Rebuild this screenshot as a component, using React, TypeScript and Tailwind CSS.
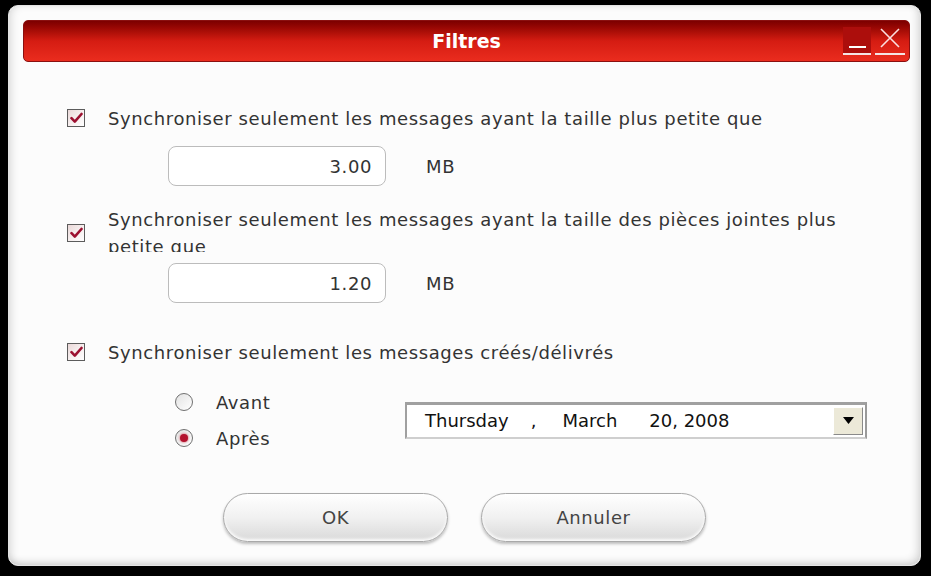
import React from "react";

function CheckBox() {
  return (
    <span className="flex h-[18px] w-[18px] shrink-0 items-center justify-center border border-[#5c5c5c] bg-gradient-to-br from-[#ead8d8] via-[#f6eeee] to-white">
      <svg width="13" height="12" viewBox="0 0 13 12">
        <path d="M1.5 6.2 L4.8 9.6 L11.5 2" fill="none" stroke="#9c1030" strokeWidth="2.6" strokeLinecap="round" strokeLinejoin="round" />
      </svg>
    </span>
  );
}

function Radio({ checked }: { checked?: boolean }) {
  return (
    <span className="flex h-[18px] w-[18px] shrink-0 items-center justify-center rounded-full border border-[#707070] bg-gradient-to-br from-[#e2e2e2] to-white">
      {checked && <span className="h-[8px] w-[8px] rounded-full bg-[#b3122e] shadow-[0_0_2px_1px_rgba(220,140,150,0.8)]" />}
    </span>
  );
}

function SizeInput({ value }: { value: string }) {
  return (
    <div className="ml-[101px] flex items-center">
      <div className="flex h-[40px] w-[218px] items-center justify-end rounded-[8px] border border-[#bcbcbc] bg-white pr-[13px] text-[18px] tracking-[0.6px] text-[#333]">
        {value}
      </div>
      <span className="ml-[40px] text-[18px] tracking-[0.6px] text-[#333]">MB</span>
    </div>
  );
}

export default function App() {
  return (
    <div className="h-[576px] w-[931px] overflow-hidden bg-black pb-[10px] pl-[8px] pr-[10px] pt-[5px] font-['DejaVu_Sans',sans-serif]">
      <div className="flex h-full w-full flex-col rounded-[10px] border border-[#e4e4e4] bg-[#fcfcfc] shadow-[inset_4px_0_8px_-2px_rgba(0,0,0,0.14),inset_-4px_-4px_8px_-2px_rgba(0,0,0,0.16)]">
        {/* Title bar */}
        <div className="ml-[14px] mr-[10px] mt-[14px] grid h-[42px] grid-cols-[1fr_auto_1fr] items-center rounded-[5px] border border-[#8a1010] bg-gradient-to-b from-[#7c0000] via-[#d51c12] to-[#ea2c1e]">
          <span />
          <span className="text-[19px] font-bold text-white">Filtres</span>
          <div className="flex items-center justify-end gap-[4px] pr-[4px]">
            <span className="flex h-[28px] w-[28px] flex-col items-center justify-end border-b-2 border-[#f4e4e4] bg-[#ac0e0c] pb-[5px]">
              <span className="h-[2px] w-[17px] bg-white" />
            </span>
            <span className="flex h-[28px] w-[30px] items-center justify-center border-b-2 border-[#f4e4e4] pb-[4px]">
              <svg width="22" height="20" viewBox="0 0 22 20">
                <path d="M2 1 L20 19 M20 1 L2 19" stroke="#fbe0e0" strokeWidth="1.6" />
              </svg>
            </span>
          </div>
        </div>

        {/* Content */}
        <div className="flex flex-col pl-[58px] text-[#333]">
          <div className="mt-[43px] flex h-[26px] items-center">
            <CheckBox />
            <span className="ml-[23px] text-[18px] tracking-[0.6px]">
              Synchroniser seulement les messages ayant la taille plus petite que
            </span>
          </div>

          <div className="mt-[15px]">
            <SizeInput value="3.00" />
          </div>

          <div className="mt-[20px] flex h-[46px] items-center">
            <span className="mt-[8px]">
              <CheckBox />
            </span>
            <div className="ml-[23px] h-[46px] overflow-hidden text-[18px] leading-[27px] tracking-[0.6px]">
              <div>Synchroniser seulement les messages ayant la taille des pièces jointes plus</div>
              <div>petite que</div>
            </div>
          </div>

          <div className="mt-[11px]">
            <SizeInput value="1.20" />
          </div>

          <div className="mt-[36px] flex h-[26px] items-center">
            <CheckBox />
            <span className="ml-[23px] text-[18px] tracking-[0.6px]">
              Synchroniser seulement les messages créés/délivrés
            </span>
          </div>

          <div className="mt-[24px] flex items-center">
            <div className="ml-[108px] flex w-[230px] flex-col gap-[10px]">
              <div className="flex h-[26px] items-center">
                <Radio />
                <span className="ml-[23px] text-[18px] tracking-[0.6px]">Avant</span>
              </div>
              <div className="flex h-[26px] items-center">
                <Radio checked />
                <span className="ml-[23px] text-[18px] tracking-[0.6px]">Après</span>
              </div>
            </div>
            <div className="flex h-[37px] w-[462px] items-center border-2 border-t-[3px] border-[#a0a0a0] border-b-[#cfcfcf] border-r-[#9a9a9a] bg-white pr-[2px] text-[18px] text-[#111]">
              <span className="ml-[18px]">Thursday</span>
              <span className="ml-[22px]">,</span>
              <span className="ml-[26px]">March</span>
              <span className="ml-[32px]">20, 2008</span>
              <span className="ml-auto flex h-[28px] w-[30px] items-center justify-center border border-b-[#8a8a8a] border-l-white border-r-[#8a8a8a] border-t-white bg-[#ece9d8]">
                <svg width="11" height="7" viewBox="0 0 11 7">
                  <path d="M0 0 H11 L5.5 7 Z" fill="#000" />
                </svg>
              </span>
            </div>
          </div>
        </div>

        {/* Buttons */}
        <div className="mt-[42px] flex justify-center gap-[33px]">
          <button className="h-[49px] w-[225px] rounded-full border border-[#a9a9a9] bg-gradient-to-b from-white via-[#f1f1f1] to-[#d9d9d9] text-[18px] tracking-[0.6px] text-[#444] shadow-[0_2px_3px_rgba(0,0,0,0.25),inset_0_-2px_3px_rgba(255,255,255,0.9)]">
            OK
          </button>
          <button className="h-[49px] w-[225px] rounded-full border border-[#a9a9a9] bg-gradient-to-b from-white via-[#f1f1f1] to-[#d9d9d9] text-[18px] tracking-[0.6px] text-[#444] shadow-[0_2px_3px_rgba(0,0,0,0.25),inset_0_-2px_3px_rgba(255,255,255,0.9)]">
            Annuler
          </button>
        </div>
      </div>
    </div>
  );
}
